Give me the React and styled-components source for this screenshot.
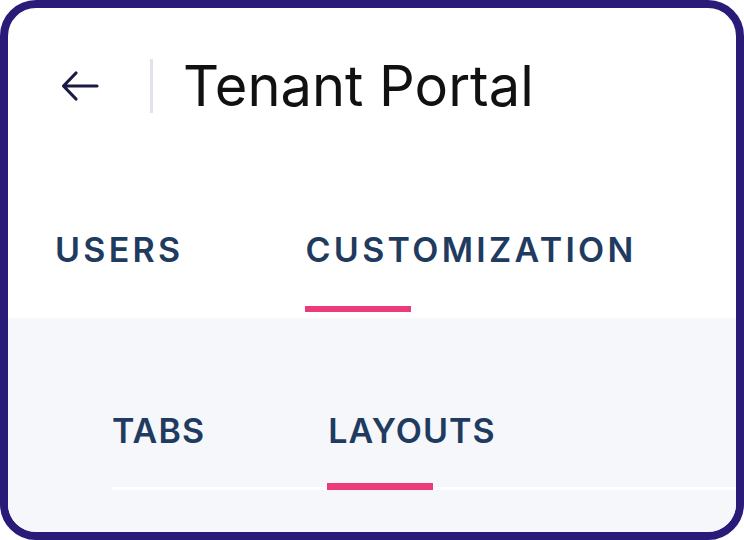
import React from "react";
import styled, { createGlobalStyle } from "styled-components";

const GlobalStyle = createGlobalStyle`
  html, body {
    margin: 0;
    padding: 0;
    background: #ffffff;
  }
  * {
    box-sizing: border-box;
  }
`;

const Card = styled.div`
  width: 744px;
  height: 540px;
  border: 8px solid #2a1b79;
  border-radius: 36px;
  background: #ffffff;
  overflow: hidden;
  display: flex;
  flex-direction: column;
  font-family: Inter, "Noto Sans", sans-serif;
`;

const Header = styled.header`
  height: 156px;
  display: flex;
  align-items: center;
  padding-left: 52px;
`;

const BackButton = styled.button`
  display: flex;
  align-items: center;
  justify-content: center;
  width: 40px;
  height: 34px;
  padding: 0;
  border: none;
  background: transparent;
  color: #1b1a45;
  cursor: pointer;
`;

const Divider = styled.span`
  width: 3px;
  height: 54px;
  margin-left: 50px;
  background: #e1e3eb;
`;

const Title = styled.h1`
  margin: 0 0 0 30px;
  font-size: 56px;
  font-weight: 400;
  line-height: 1;
  color: #111111;
`;

const TabList = styled.nav`
  display: flex;
  gap: ${(p) => p.gap}px;
  padding-left: ${(p) => p.inset}px;
  padding-bottom: ${(p) => (p.sub ? 0 : 6)}px;
  border-bottom: ${(p) => (p.sub ? "3px solid #ffffff" : "none")};
`;

const Tab = styled.div`
  position: relative;
  padding-top: ${(p) => p.top}px;
  padding-bottom: ${(p) => p.bottom}px;
  font-size: 34px;
  line-height: 40px;
  font-weight: 600;
  letter-spacing: ${(p) => (p.sub ? 1.1 : 3.3)}px;
  color: #1f3b60;
  text-transform: uppercase;
  cursor: pointer;

  &::after {
    content: "";
    position: absolute;
    left: -1px;
    bottom: ${(p) => (p.sub ? -3 : 0)}px;
    width: 106px;
    height: ${(p) => (p.sub ? 7 : 6)}px;
    background: ${(p) => (p.active ? "#ec3b7c" : "transparent")};
  }
`;

const Panel = styled.section`
  flex: 1;
  background: #f6f7fa;
  padding-left: 104px;
`;

const ArrowLeft = () => (
  <svg width="38" height="32" viewBox="0 0 38 32" fill="none">
    <path
      d="M36 16H3M15 3L2.5 16L15 29"
      stroke="currentColor"
      strokeWidth="3.2"
      strokeLinecap="round"
      strokeLinejoin="round"
    />
  </svg>
);

const mainTabs = ["Users", "Customization"];
const subTabs = ["Tabs", "Layouts"];

export default function App() {
  return (
    <>
      <GlobalStyle />
      <Card>
        <Header>
          <BackButton aria-label="Back">
            <ArrowLeft />
          </BackButton>
          <Divider />
          <Title>Tenant Portal</Title>
        </Header>
        <TabList gap={122} inset={47}>
          {mainTabs.map((t) => (
            <Tab key={t} top={66} bottom={42} active={t === "Customization"}>
              {t}
            </Tab>
          ))}
        </TabList>
        <Panel>
          <TabList sub gap={123} inset={0}>
            {subTabs.map((t) => (
              <Tab key={t} sub top={93} bottom={36} active={t === "Layouts"}>
                {t}
              </Tab>
            ))}
          </TabList>
        </Panel>
      </Card>
    </>
  );
}
